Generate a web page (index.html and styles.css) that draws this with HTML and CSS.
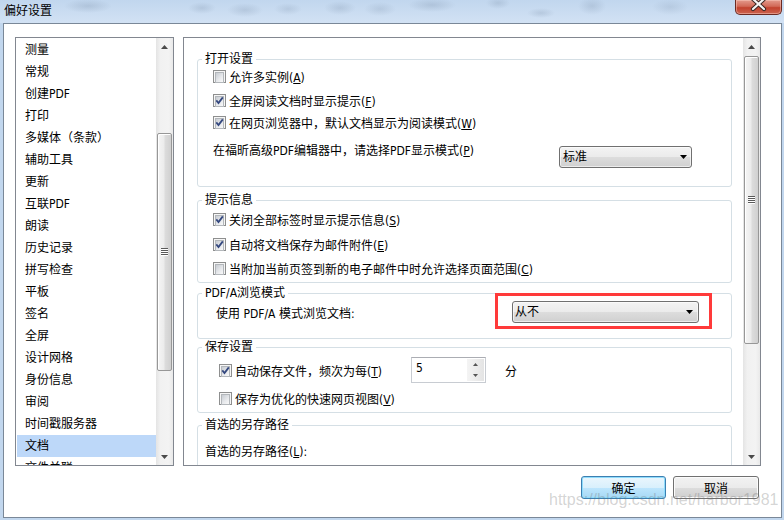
FILE: index.html
```html
<!DOCTYPE html>
<html lang="zh-CN">
<head>
<meta charset="utf-8">
<title>偏好设置</title>
<link rel="stylesheet" href="styles.css">
</head>
<body>
<div class="window">
  <div class="titlebar">
    <span class="title">偏好设置</span>
    <div class="close">
      <svg width="47" height="14" viewBox="0 0 47 14">
        <path d="M18 -1 L29 9 M29 -1 L18 9" stroke="#3b2622" stroke-width="4.2" stroke-linecap="round"/>
        <path d="M18 -1 L29 9 M29 -1 L18 9" stroke="#f4f4f4" stroke-width="2.2" stroke-linecap="round"/>
      </svg>
    </div>
  </div>
  <div class="client">
    <div class="main">
      <div class="listbox">
        <ul class="list">
          <li>测量</li>
          <li>常规</li>
          <li>创建PDF</li>
          <li>打印</li>
          <li>多媒体（条款）</li>
          <li>辅助工具</li>
          <li>更新</li>
          <li>互联PDF</li>
          <li>朗读</li>
          <li>历史记录</li>
          <li>拼写检查</li>
          <li>平板</li>
          <li>签名</li>
          <li>全屏</li>
          <li>设计网格</li>
          <li>身份信息</li>
          <li>审阅</li>
          <li>时间戳服务器</li>
          <li class="sel">文档</li>
          <li>文件关联</li>
        </ul>
        <div class="vscroll">
          <div class="sb-arrow"><svg width="7" height="4" viewBox="0 0 7 4"><polygon points="0,4 3.5,0 7,4" fill="#4a4a4a"/></svg></div>
          <div class="sb-thumb thumb-left">
            <svg width="7" height="8" viewBox="0 0 7 8"><path d="M0 0.5H7M0 2.5H7M0 4.5H7M0 6.5H7" stroke="#5a5a5a" stroke-width="1"/><path d="M0 1.5H7M0 3.5H7M0 5.5H7M0 7.5H7" stroke="#ffffff" stroke-width="1"/></svg>
          </div>
          <div class="sb-arrow sb-down"><svg width="7" height="4" viewBox="0 0 7 4"><polygon points="0,0 7,0 3.5,4" fill="#4a4a4a"/></svg></div>
        </div>
      </div>

      <div class="panel">
        <div class="panel-content">
          <fieldset class="grp g1">
            <legend>打开设置</legend>
            <div class="chk">
              <span class="cb"><span class="cb-box"></span></span>
              <span>允许多实例(<u>A</u>)</span>
            </div>
            <div class="chk mt6">
              <span class="cb"><span class="cb-box"></span><svg width="13" height="13" viewBox="0 0 13 13"><polyline points="3.3,6.4 5.5,9 9.8,3.4" fill="none" stroke="#34487f" stroke-width="1.8"/></svg></span>
              <span>全屏阅读文档时显示提示(<u>F</u>)</span>
            </div>
            <div class="chk mt4">
              <span class="cb"><span class="cb-box"></span><svg width="13" height="13" viewBox="0 0 13 13"><polyline points="3.3,6.4 5.5,9 9.8,3.4" fill="none" stroke="#34487f" stroke-width="1.8"/></svg></span>
              <span>在网页浏览器中，默认文档显示为阅读模式(<u>W</u>)</span>
            </div>
            <div class="combo-row mt12">
              <span class="combo-label">在福昕高级PDF编辑器中，请选择PDF显示模式(<u>P</u>)</span>
              <div class="combo combo-std">
                <span class="combo-text">标准</span>
                <svg width="7" height="4" viewBox="0 0 7 4"><polygon points="0,0 7,0 3.5,4" fill="#000"/></svg>
              </div>
            </div>
          </fieldset>

          <fieldset class="grp g2">
            <legend>提示信息</legend>
            <div class="chk mt2">
              <span class="cb"><span class="cb-box"></span><svg width="13" height="13" viewBox="0 0 13 13"><polyline points="3.3,6.4 5.5,9 9.8,3.4" fill="none" stroke="#34487f" stroke-width="1.8"/></svg></span>
              <span>关闭全部标签时显示提示信息(<u>S</u>)</span>
            </div>
            <div class="chk mt7">
              <span class="cb"><span class="cb-box"></span><svg width="13" height="13" viewBox="0 0 13 13"><polyline points="3.3,6.4 5.5,9 9.8,3.4" fill="none" stroke="#34487f" stroke-width="1.8"/></svg></span>
              <span>自动将文档保存为邮件附件(<u>E</u>)</span>
            </div>
            <div class="chk mt6">
              <span class="cb"><span class="cb-box"></span></span>
              <span>当附加当前页签到新的电子邮件中时允许选择页面范围(<u>C</u>)</span>
            </div>
          </fieldset>

          <fieldset class="grp g3">
            <legend>PDF/A浏览模式</legend>
            <div class="pdfa-row">
              <span>使用 PDF/A 模式浏览文档:</span>
              <div class="hl">
                <div class="combo combo-never">
                  <span class="combo-text">从不</span>
                  <svg width="7" height="4" viewBox="0 0 7 4"><polygon points="0,0 7,0 3.5,4" fill="#000"/></svg>
                </div>
              </div>
            </div>
          </fieldset>

          <fieldset class="grp g4">
            <legend>保存设置</legend>
            <div class="chk chk-wide spin-row mt2">
              <span class="cb"><span class="cb-box"></span><svg width="13" height="13" viewBox="0 0 13 13"><polyline points="3.3,6.4 5.5,9 9.8,3.4" fill="none" stroke="#34487f" stroke-width="1.8"/></svg></span>
              <span class="lbl-fixed">自动保存文件，频次为每(<u>T</u>)</span>
              <div class="spin">
                <span class="spin-val">5</span>
                <div class="spin-btns">
                  <div class="spin-b"><svg width="5" height="3" viewBox="0 0 5 3"><polygon points="0,3 2.5,0 5,3" fill="#555"/></svg></div>
                  <div class="spin-b"><svg width="5" height="3" viewBox="0 0 5 3"><polygon points="0,0 5,0 2.5,3" fill="#555"/></svg></div>
                </div>
              </div>
              <span class="unit">分</span>
            </div>
            <div class="chk chk-wide mt6">
              <span class="cb"><span class="cb-box"></span></span>
              <span>保存为优化的快速网页视图(<u>V</u>)</span>
            </div>
          </fieldset>

          <fieldset class="grp g5">
            <legend>首选的另存路径</legend>
            <div class="path-label">首选的另存路径(<u>L</u>):</div>
            <div class="path-input"></div>
          </fieldset>
        </div>
        <div class="vscroll">
          <div class="sb-arrow"><svg width="7" height="4" viewBox="0 0 7 4"><polygon points="0,4 3.5,0 7,4" fill="#4a4a4a"/></svg></div>
          <div class="sb-thumb thumb-right">
            <svg width="7" height="8" viewBox="0 0 7 8"><path d="M0 0.5H7M0 2.5H7M0 4.5H7M0 6.5H7" stroke="#5a5a5a" stroke-width="1"/><path d="M0 1.5H7M0 3.5H7M0 5.5H7M0 7.5H7" stroke="#ffffff" stroke-width="1"/></svg>
          </div>
          <div class="sb-arrow sb-down"><svg width="7" height="4" viewBox="0 0 7 4"><polygon points="0,0 7,0 3.5,4" fill="#4a4a4a"/></svg></div>
        </div>
      </div>
    </div>

    <div class="buttons">
      <button class="btn btn-default">确定</button>
      <button class="btn btn-cancel">取消</button>
    </div>
    <div class="watermark">https://blog.csdn.net/harbor1981</div>
  </div>
</div>
</body>
</html>
```

FILE: styles.css
```css
* { box-sizing: border-box; }
html, body { margin: 0; padding: 0; }
body {
  width: 784px;
  height: 520px;
  overflow: hidden;
  font-family: "DejaVu Sans Condensed", "Noto Sans CJK SC", sans-serif;
  font-size: 12px;
  color: #000;
}
u { text-decoration: underline; text-underline-offset: 1px; }

.window {
  width: 784px;
  height: 520px;
  display: flex;
  flex-direction: column;
  background: #c2d7ee;
}

.titlebar {
  height: 23px;
  flex: none;
  display: flex;
  align-items: flex-start;
  background:
    radial-gradient(ellipse 24px 7px at 88px 6px, rgba(120,140,165,.28), transparent),
    radial-gradient(ellipse 14px 6px at 202px 8px, rgba(120,140,165,.25), transparent),
    radial-gradient(ellipse 18px 7px at 245px 10px, rgba(120,140,165,.25), transparent),
    radial-gradient(ellipse 14px 6px at 288px 9px, rgba(120,140,165,.22), transparent),
    radial-gradient(ellipse 16px 7px at 340px 8px, rgba(120,140,165,.25), transparent),
    radial-gradient(ellipse 16px 7px at 380px 9px, rgba(120,140,165,.22), transparent),
    radial-gradient(ellipse 24px 7px at 432px 5px, rgba(120,140,165,.28), transparent),
    radial-gradient(ellipse 12px 6px at 498px 3px, rgba(120,140,165,.25), transparent),
    radial-gradient(ellipse 14px 5px at 541px 13px, rgba(120,140,165,.25), transparent),
    radial-gradient(ellipse 14px 9px at 592px 6px, rgba(120,140,165,.25), transparent),
    radial-gradient(ellipse 18px 8px at 670px 7px, rgba(120,140,165,.2), transparent),
    linear-gradient(#c1d6ee, #d2e2f4);
}
.title {
  margin-left: 4px;
  line-height: 20px;
  font-family: "Noto Sans CJK SC", sans-serif;
  font-size: 12px;
}
.close {
  margin-left: auto;
  margin-right: 2px;
  width: 47px;
  height: 15px;
  border: 1px solid #6b2a22;
  border-top: none;
  border-radius: 0 0 5px 5px;
  background: linear-gradient(#e39a8c, #d26a58 45%, #c2422e 55%, #cc6450);
  box-shadow: inset 0 0 0 1px rgba(255,210,200,.45);
  overflow: hidden;
  display: flex;
  justify-content: center;
}
.close svg { display: block; flex: none; }

.client {
  flex: 1;
  margin: 0 2px 2px 3px;
  border: 1px solid #7a8898;
  background: #fff;
  position: relative;
  display: flex;
  flex-direction: column;
  padding: 13px 20px 0 11px;
}

.main {
  display: flex;
  gap: 9px;
  height: 429px;
  flex: none;
}

/* left list */
.listbox {
  width: 159px;
  flex: none;
  border: 1px solid #828790;
  display: flex;
  overflow: hidden;
}
.list {
  flex: 1;
  list-style: none;
  margin: 0;
  padding: 1px 0 0 1px;
  overflow: hidden;
}
.list li {
  height: 22px;
  line-height: 23px;
  padding-left: 8px;
  white-space: nowrap;
}
.list li.sel { background: #bdd8f9; }

/* scrollbars */
.vscroll {
  width: 17px;
  flex: none;
  display: flex;
  flex-direction: column;
  background: linear-gradient(to right, #e4e4e4, #f1f1f1 25%, #f3f3f3 75%, #e9e9e9);
}
.sb-arrow {
  height: 17px;
  flex: none;
  display: flex;
  align-items: center;
  justify-content: center;
}
.sb-arrow svg { display: block; }
.sb-down { margin-top: auto; }
.sb-thumb {
  flex: none;
  margin: 0 1px;
  border: 1px solid #979797;
  border-radius: 2px;
  background: linear-gradient(to right, #f5f5f5, #ececec 45%, #dcdcdc 55%, #d0d0d0);
  box-shadow: inset 1px 1px 0 #fff;
  display: flex;
  align-items: center;
  justify-content: center;
}
.sb-thumb svg { display: block; }
.thumb-left { margin-top: 78px; height: 238px; }
.thumb-right { margin-top: 1px; height: 288px; }

/* right panel */
.panel {
  flex: 1;
  border: 1px solid #828790;
  display: flex;
  overflow: hidden;
}
.panel-content {
  flex: 1;
  padding: 13px 11px 0 13px;
  overflow: hidden;
}

.grp {
  border: 1px solid #d5dfe5;
  border-radius: 3px;
  margin: 0;
  padding: 0;
  min-width: 0;
}
.grp legend {
  margin-left: 4px;
  padding: 0 3px;
  line-height: 16px;
}
.g1 { padding-bottom: 18px; }
.g2 { margin-top: 5px; padding-bottom: 5px; }
.g3 { margin-top: 2px; padding-bottom: 15px; }
.g4 { margin-top: 0; padding-bottom: 5px; }
.g5 { margin-top: 4px; padding-bottom: 20px; }

.mt2 { margin-top: 2px; }
.mt4 { margin-top: 4px; }
.mt6 { margin-top: 6px; }
.mt7 { margin-top: 7px; }
.mt12 { margin-top: 12px; }

.chk {
  display: flex;
  align-items: center;
  height: 18px;
  padding-left: 15px;
  gap: 3px;
  white-space: nowrap;
}
.chk-wide { padding-left: 21px; }
.spin-row { height: 26px; }

.cb {
  display: grid;
  width: 13px;
  height: 13px;
  flex: none;
}
.cb > * { grid-area: 1 / 1; }
.cb svg { display: block; }
.cb-box {
  border: 1px solid #8e8f8f;
  background: #f6f6f6;
  padding: 1px;
}
.cb-box::after {
  content: "";
  display: block;
  height: 100%;
  border: 1px solid #b3b7bb;
  background: linear-gradient(135deg, #c8ccd2 0%, #e6e8eb 55%, #f9f9f9 100%);
}

.combo-row {
  display: flex;
  align-items: flex-start;
  padding-left: 15px;
  white-space: nowrap;
}
.combo-label { line-height: 16px; }
.combo {
  height: 22px;
  border: 1px solid #707070;
  border-radius: 3px;
  background: linear-gradient(#f3f3f3 0%, #ebebeb 50%, #dddddd 50%, #d0d0d0 100%);
  box-shadow: inset 0 0 0 1px rgba(255,255,255,.6);
  display: flex;
  align-items: center;
}
.combo svg { display: block; flex: none; }
.combo-text { flex: 1; line-height: 20px; }
.combo-std {
  width: 133px;
  margin-left: auto;
  margin-right: 39px;
  margin-top: 3px;
  padding: 0 4px 0 3px;
}
.combo-never {
  width: 187px;
  padding: 0 5px 0 2px;
}

.pdfa-row {
  display: flex;
  align-items: center;
  height: 22px;
  padding-left: 18px;
  white-space: nowrap;
}
.hl {
  position: relative;
  margin-left: auto;
  margin-right: 32px;
}
.hl::after {
  content: "";
  position: absolute;
  left: -17px;
  right: -13px;
  top: -8px;
  bottom: -6px;
  border: 3px solid #ff3a3a;
}

.lbl-fixed { width: 173px; flex: none; }
.spin {
  width: 75px;
  height: 26px;
  flex: none;
  border: 1px solid #c8ccd2;
  border-top-color: #abadb3;
  background: #fff;
  display: flex;
}
.spin-val {
  flex: 1;
  padding: 3px 0 0 4px;
  line-height: 14px;
}
.spin-btns {
  width: 17px;
  margin: 1px;
  display: flex;
  flex-direction: column;
  background: linear-gradient(to right, #f4f4f4, #e4e4e4);
}
.spin-b {
  flex: 1;
  display: flex;
  align-items: center;
  justify-content: center;
}
.spin-b svg { display: block; }
.unit { margin-left: 16px; }

.path-label {
  margin-top: 11px;
  padding-left: 7px;
  line-height: 16px;
}
.path-input {
  margin: 6px 40px 0 7px;
  height: 22px;
  border: 1px solid #abadb3;
}

/* buttons */
.buttons {
  display: flex;
  justify-content: flex-end;
  gap: 7px;
  margin-top: 10px;
  margin-right: 2px;
}
.btn {
  height: 23px;
  border: 1px solid #707070;
  border-radius: 3px;
  background: linear-gradient(#f2f2f2, #ebebeb 50%, #dddddd 50%, #cfcfcf);
  box-shadow: inset 0 0 0 1px #fbfbfb;
  font: inherit;
  color: #000;
  padding: 0;
}
.btn-default {
  width: 85px;
  border-color: #3c7fb1;
  background: linear-gradient(#eaf6fd, #d9f0fc 50%, #bee6fd 50%, #a7d9f5);
  box-shadow: inset 0 0 0 1px #8fdcfc;
}
.btn-cancel { width: 86px; }

.watermark {
  position: absolute;
  left: 545px;
  top: 467px;
  font-family: "Liberation Sans", sans-serif;
  font-size: 16px;
  line-height: 18px;
  color: rgba(110,110,110,.3);
  white-space: nowrap;
  pointer-events: none;
}
```
